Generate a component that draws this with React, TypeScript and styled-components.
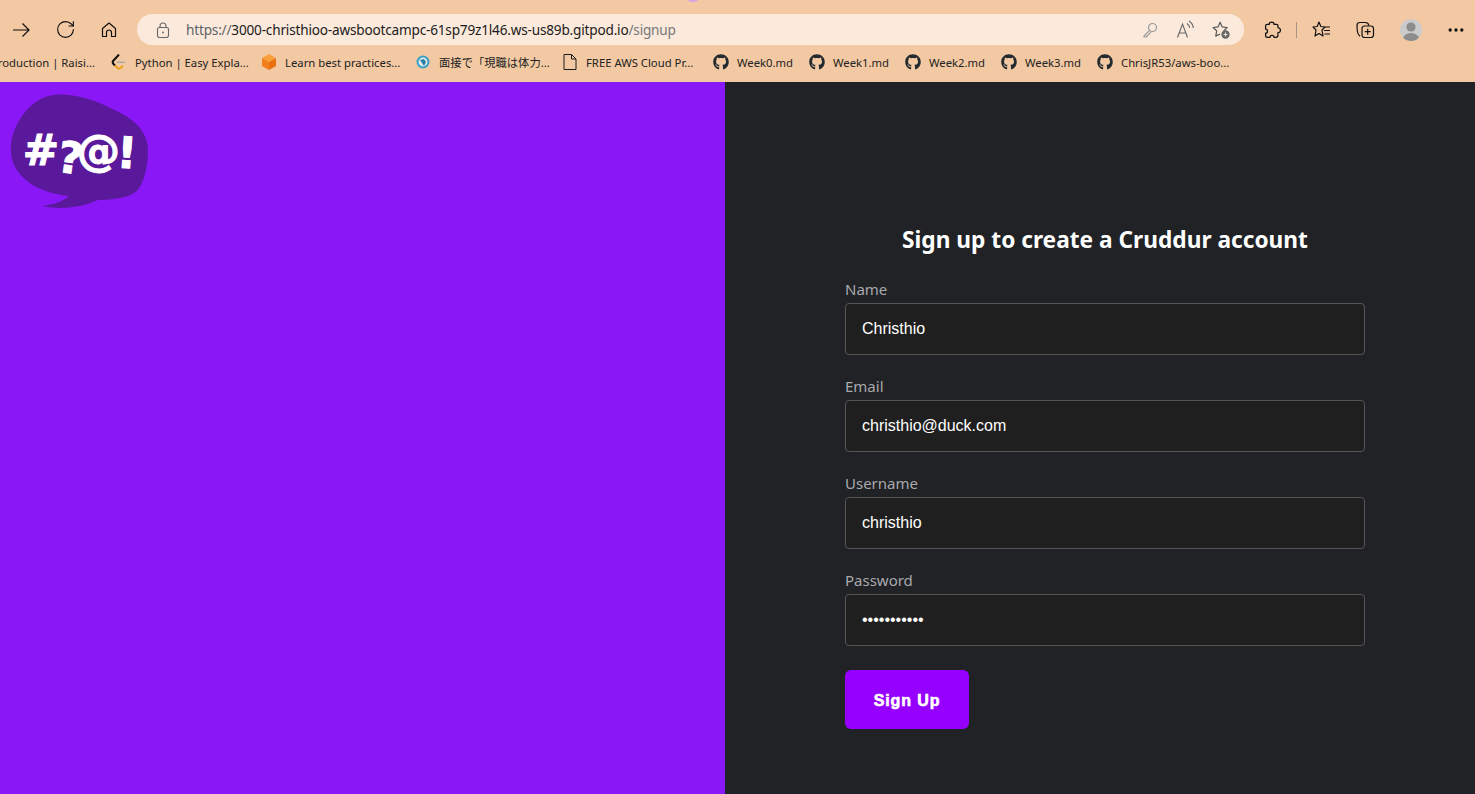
import React, { FunctionComponent } from "react";
import styled, { createGlobalStyle } from "styled-components";
import { RotateCw, MoreHorizontal } from "lucide-react";
import { FaGithub } from "react-icons/fa";

const GlobalStyle = createGlobalStyle`
    html, body {
        margin: 0;
        padding: 0;
        height: 100%;
        overflow: hidden;
    }
    #root {
        height: 100%;
    }
`;

const bookmarks = [
    { label: "Python | Easy Expla...", icon: "leet", width: 110 },
    { label: "Learn best practices...", icon: "cube", width: 114 },
    { label: "面接で「現職は体力...", icon: "globe", width: 107 },
    { label: "FREE AWS Cloud Pr...", icon: "file", width: 111 },
    { label: "Week0.md", icon: "gh", width: 56 },
    { label: "Week1.md", icon: "gh", width: 56 },
    { label: "Week2.md", icon: "gh", width: 56 },
    { label: "Week3.md", icon: "gh", width: 56 },
    { label: "ChrisJR53/aws-boo...", icon: "gh", width: 110 },
];

const fields = [
    { label: "Name", value: "Christhio", type: "text" },
    { label: "Email", value: "christhio@duck.com", type: "text" },
    { label: "Username", value: "christhio", type: "text" },
    { label: "Password", value: "christhio12", type: "password" },
];

const BookmarkIcon: FunctionComponent<{ kind: string }> = ({ kind }) => {
    if (kind === "gh") return <FaGithub size={16} color="#24292e" />;
    if (kind === "file") {
        return (
            <svg width="16" height="16" viewBox="0 0 16 16" fill="none" stroke="#1c1c1c" strokeWidth="1">
                <path d="M2 .5H9.5L14 5V15.5H2Z" strokeLinejoin="round" />
                <path d="M9.5 .5V5H14" />
            </svg>
        );
    }
    if (kind === "cube") {
        return (
            <svg width="16" height="16" viewBox="0 0 16 16">
                <path d="M8 0 15 4 8 8 1 4Z" fill="#f9a03c" />
                <path d="M1 4 8 8V16L1 12Z" fill="#f27f1b" />
                <path d="M15 4 8 8V16L15 12Z" fill="#e8700f" />
            </svg>
        );
    }
    if (kind === "globe") {
        return (
            <svg width="16" height="16" viewBox="0 0 16 16">
                <circle cx="8" cy="8" r="6.5" fill="#3f9fc0" />
                <circle cx="8" cy="8" r="4.4" fill="#e6eef2" />
                <path d="M5 6 9 5 11 8 9 12 7 9Z" fill="#2b7ea0" />
            </svg>
        );
    }
    return (
        <svg width="16" height="16" viewBox="0 0 16 16" fill="none">
            <path d="M8 .5 2.5 6.5C1.5 7.6 1.5 9 2.5 10L4 11.5" stroke="#111" strokeWidth="2" />
            <path d="M4 11.5 6 13.5C7.2 14.7 9 14.7 10.2 13.5L12 11.7" stroke="#f0a020" strokeWidth="2" />
            <path d="M6 8.3H14" stroke="#a8a8a8" strokeWidth="1.5" />
        </svg>
    );
};

const BackArrow: FunctionComponent = () => (
    <svg width="20" height="20" viewBox="0 0 20 20" fill="none" stroke="#111" strokeWidth="1.2">
        <path d="M2 10H18M11.5 3.5 18 10 11.5 16.5" />
    </svg>
);

const HomeIcon: FunctionComponent = () => (
    <svg width="16" height="16" viewBox="0 0 16 16" fill="none" stroke="#111" strokeWidth="1.2" strokeLinejoin="round">
        <path d="M1.5 14.5V6.5L8 1 14.5 6.5V14.5H10.5V10.5A2.5 2.5 0 0 0 5.5 10.5V14.5Z" />
    </svg>
);

const LockIcon: FunctionComponent = () => (
    <svg width="16" height="16" viewBox="0 0 16 16" fill="none" stroke="#666" strokeWidth="1.1">
        <rect x="2.5" y="5.5" width="11" height="10" rx="2" />
        <path d="M5 5.5V4A3 3 0 0 1 11 4V5.5" />
        <circle cx="8" cy="10.5" r="0.9" fill="#666" stroke="none" />
    </svg>
);

const KeyIcon: FunctionComponent = () => (
    <svg width="16" height="16" viewBox="0 0 16 16" fill="none" stroke="#999" strokeWidth="1.2">
        <circle cx="10.5" cy="5.5" r="4" />
        <path d="M7.6 8.4 2 14V15H4.2L9 10.2" strokeLinejoin="round" />
    </svg>
);

const ReadAloud: FunctionComponent = () => (
    <svg width="20" height="20" viewBox="0 0 20 20" fill="none" stroke="#666" strokeWidth="1.1">
        <path d="M2.5 17.5 7.5 4 12.5 17.5M4.2 13H10.8" />
        <path d="M12 3.5C13.5 4.5 14.5 6 14.8 8M14 1C16.5 2.5 18 5 18.3 8" />
    </svg>
);

const FavStar: FunctionComponent = () => (
    <svg width="18" height="18" viewBox="0 0 20 20" fill="none">
        <path
            d="M13 11 16.8 7.2 11.2 6.5 9 1.5 6.8 6.5 1.2 7.2 5.2 11 4.2 16.8 9 14.5"
            stroke="#555"
            strokeWidth="1.3"
            strokeLinejoin="round"
        />
        <circle cx="15" cy="15" r="4.6" fill="#666" />
        <path d="M15 12.8V17.2M12.8 15H17.2" stroke="#f3e6d8" strokeWidth="1.2" />
    </svg>
);

const ExtensionIcon: FunctionComponent = () => (
    <svg width="18" height="18" viewBox="0 0 16 16" fill="none" stroke="#111" strokeWidth="1.1" strokeLinejoin="round">
        <path d="M5.5 3C5.5 1.8 6.5 1 7.7 1C8.9 1 9.9 1.8 9.9 3H12C12.8 3 13.3 3.6 13.3 4.3V6C14.6 6 15.5 7 15.5 8.2C15.5 9.4 14.6 10.4 13.3 10.4V12.5C13.3 13.5 12.7 14.5 11.5 14.5H9.8C9.8 13.5 9 12.8 8 12.8C7 12.8 6.2 13.5 6.2 14.5H4C3 14.5 2.3 13.8 2.3 12.8V10.8C3.2 10.8 4 10 4 9C4 8 3.2 7.2 2.3 7.2V4.5C2.3 3.6 3 3 3.8 3Z" />
    </svg>
);

const FavList: FunctionComponent = () => (
    <svg width="20" height="20" viewBox="0 0 20 20" fill="none" stroke="#111" strokeWidth="1.2">
        <path d="M8 2 9.8 6.5 14 7 11 10 12 16 8 13.5 4 16 5 10 2 7 6.2 6.5Z" strokeLinejoin="round" />
        <path d="M14 7H19M13 10.5H19M13.5 14H19" />
    </svg>
);

const Collections: FunctionComponent = () => (
    <svg width="20" height="20" viewBox="0 0 20 20" fill="none" stroke="#111" strokeWidth="1.2">
        <rect x="7" y="6" width="11.5" height="11.5" rx="2.5" />
        <path d="M12.7 8.7V14.8M9.7 11.7H15.7" />
        <path d="M14 5.5C13.5 3.5 12.5 2.5 10.5 2.5H5C3 2.5 2 3.5 2 5.5L2.3 11C2.5 13 3.5 15 5 16.2" />
    </svg>
);

const Avatar: FunctionComponent = () => (
    <svg width="24" height="24" viewBox="0 0 24 24">
        <defs>
            <clipPath id="avatar-clip">
                <circle cx="12" cy="12" r="11" />
            </clipPath>
        </defs>
        <circle cx="12" cy="12" r="11" fill="#cbcbcb" />
        <g clipPath="url(#avatar-clip)" fill="#8c8c8c">
            <circle cx="12" cy="9" r="4.6" />
            <ellipse cx="12" cy="21" rx="8" ry="6" />
        </g>
    </svg>
);

const Logo: FunctionComponent = () => (
    <LogoSvg viewBox="0 0 510 420">
        <path
            d="M165 38C225 34 290 55 345 85C395 108 435 140 443 190C447 235 437 290 415 322C392 350 340 352 290 355C255 374 190 385 125 372C160 368 190 358 207 342C160 338 100 320 68 285C40 258 30 225 33 190C36 130 90 45 165 38Z"
            fill="#5a189a"
        />
        <LogoText x="68 168 230 348" y="250 268 252 256" rotate="0 8 0 4" fontSize="130">
            #?@!
        </LogoText>
    </LogoSvg>
);

const App: FunctionComponent = () => {
    return (
        <Root>
            <GlobalStyle />
            <Chrome>
                <TabMark />
                <Toolbar>
                    <ToolButton><BackArrow /></ToolButton>
                    <ToolButton><RotateCw size={21} strokeWidth={1.3} color="#111" /></ToolButton>
                    <ToolButton><HomeIcon /></ToolButton>
                    <AddressBar>
                        <LockIcon />
                        <Url>
                            <Scheme>https://</Scheme>3000-christhioo-awsbootcampc-61sp79z1l46.ws-us89b.gitpod.io<UrlPath>/signup</UrlPath>
                        </Url>
                        <AddressIcons>
                            <KeyIcon />
                            <ReadAloud />
                            <FavStar />
                        </AddressIcons>
                    </AddressBar>
                    <RightTools>
                        <ToolButton><ExtensionIcon /></ToolButton>
                        <Separator />
                        <ToolButton><FavList /></ToolButton>
                        <ToolButton><Collections /></ToolButton>
                        <ToolButton $width={48}><Avatar /></ToolButton>
                        <ToolButton $width={42}><MoreHorizontal size={20} color="#111" /></ToolButton>
                    </RightTools>
                </Toolbar>
                <BookmarkBar>
                    <FirstBookmark>
                        <BookmarkLabel>roduction | Raisi...</BookmarkLabel>
                    </FirstBookmark>
                    {bookmarks.map((item) => (
                        <Bookmark key={item.label}>
                            <BookmarkIcon kind={item.icon} />
                            <BookmarkLabel $width={item.width}>{item.label}</BookmarkLabel>
                        </Bookmark>
                    ))}
                </BookmarkBar>
            </Chrome>
            <Main>
                <LeftPanel>
                    <Logo />
                </LeftPanel>
                <RightPanel>
                    <Form onSubmit={(e) => e.preventDefault()}>
                        <Title>Sign up to create a Cruddur account</Title>
                        {fields.map((field) => (
                            <Field key={field.label}>
                                <Label>{field.label}</Label>
                                <Input type={field.type} defaultValue={field.value} />
                            </Field>
                        ))}
                        <SubmitButton type="submit">Sign Up</SubmitButton>
                    </Form>
                </RightPanel>
            </Main>
        </Root>
    );
};

const Root = styled.div`
    display: flex;
    flex-direction: column;
    height: 100%;
    font-family: "Noto Sans", "Noto Sans CJK JP", sans-serif;
`;

const Chrome = styled.header`
    position: relative;
    height: 82px;
    flex: none;
    background: #f3c9a3;
    overflow: hidden;
`;

const TabMark = styled.div`
    position: absolute;
    left: 688px;
    top: -3px;
    width: 10px;
    height: 5px;
    border-radius: 50%;
    background: #d9a6e0;
`;

const Toolbar = styled.div`
    display: flex;
    align-items: center;
    height: 31px;
    padding-top: 14px;
    margin-left: -1px;
`;

const ToolButton = styled.div<{ $width?: number }>`
    display: flex;
    align-items: center;
    justify-content: center;
    width: ${(p) => p.$width ?? 44}px;
    height: 31px;
    flex: none;
`;

const AddressBar = styled.div`
    display: flex;
    align-items: center;
    width: 1107px;
    height: 31px;
    margin-left: 6px;
    padding-left: 18px;
    box-sizing: border-box;
    background: #fbeadc;
    border-radius: 16px;
    flex: none;
`;

const Url = styled.div`
    margin-left: 15px;
    font-size: 13.6px;
    letter-spacing: -0.19px;
    color: #1b1b1b;
    white-space: nowrap;
`;

const Scheme = styled.span`
    color: #5f6368;
`;

const UrlPath = styled.span`
    color: #777;
`;

const AddressIcons = styled.div`
    display: flex;
    align-items: center;
    gap: 17px;
    margin-left: auto;
    padding-right: 14px;
`;

const RightTools = styled.div`
    display: flex;
    align-items: center;
    margin-left: 6px;
`;

const Separator = styled.div`
    width: 1px;
    height: 16px;
    background: #a89484;
    margin: 0 2px;
`;

const BookmarkBar = styled.nav`
    display: flex;
    align-items: center;
    gap: 16px;
    height: 22px;
    margin-top: 6px;
    margin-left: -1px;
`;

const Bookmark = styled.div`
    display: flex;
    align-items: center;
    gap: 8px;
    flex: none;
`;

const FirstBookmark = styled(Bookmark)`
    justify-content: flex-end;
    width: 96px;
`;

const BookmarkLabel = styled.span<{ $width?: number }>`
    flex: none;
    width: ${(p) => (p.$width ? `${p.$width}px` : "auto")};
    font-size: 11.3px;
    color: #222;
    white-space: nowrap;
`;

const Main = styled.main`
    display: flex;
    flex: 1;
    min-height: 0;
`;

const LeftPanel = styled.section`
    width: 725px;
    flex: none;
    background: #8a17f5;
`;

const LogoSvg = styled.svg`
    display: block;
    width: 170px;
    height: 140px;
`;

const LogoText = styled.text`
    fill: #fff;
    stroke: #fff;
    stroke-width: 3px;
    font-family: "DejaVu Sans", sans-serif;
    font-weight: 700;
`;

const RightPanel = styled.section`
    flex: 1;
    padding: 142px 110px 0 120px;
    background: #202226;
`;

const Form = styled.form`
    display: flex;
    flex-direction: column;
    align-items: flex-start;
    width: 520px;
`;

const Title = styled.h2`
    align-self: stretch;
    margin: 0 0 23px;
    font-size: 22.7px;
    line-height: 32px;
    font-weight: 700;
    text-align: center;
    color: #fff;
`;

const Field = styled.label`
    display: flex;
    flex-direction: column;
    align-self: stretch;
    margin-bottom: 21px;
`;

const Label = styled.span`
    height: 24px;
    font-size: 15px;
    line-height: 20px;
    color: #a9a9ad;
`;

const Input = styled.input`
    box-sizing: border-box;
    width: 100%;
    height: 52px;
    padding: 0 16px;
    font-family: "Liberation Sans", Arial, sans-serif;
    font-size: 16px;
    color: #fff;
    background: #1f1f1f;
    border: 1px solid #555;
    border-radius: 4px;
    outline: none;
`;

const SubmitButton = styled.button`
    width: 124px;
    height: 59px;
    margin-top: 3px;
    padding: 2px 0 0;
    font-family: "Liberation Sans", Arial, sans-serif;
    font-size: 16px;
    font-weight: 700;
    letter-spacing: 0.9px;
    -webkit-text-stroke: 0.6px #fff;
    color: #fff;
    background: #9500ff;
    border: none;
    border-radius: 6px;
`;

export default App;
